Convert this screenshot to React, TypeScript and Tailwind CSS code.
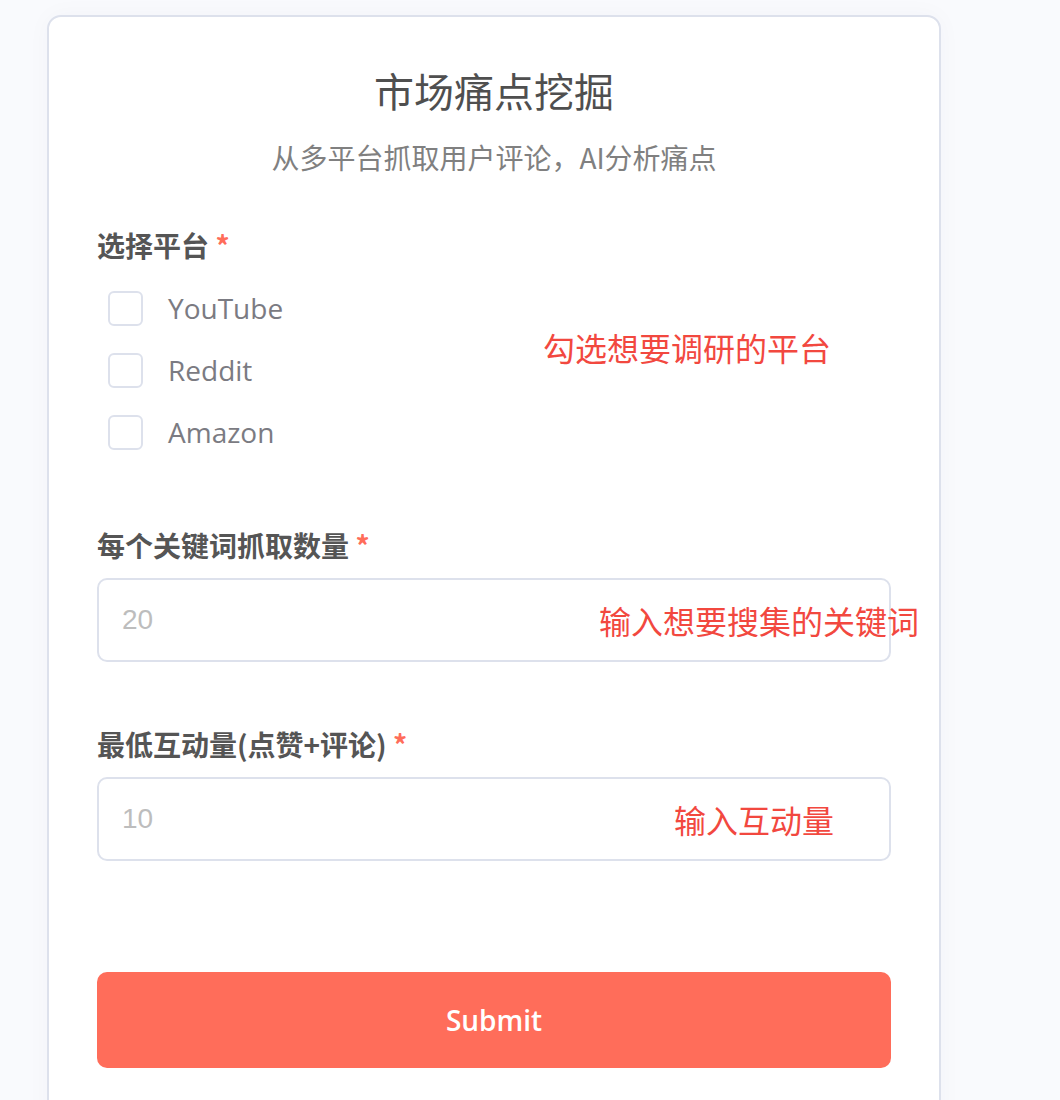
import React from "react";

const cjk = "font-['Noto_Sans_CJK_SC',sans-serif]";

// Little red notes laid over the form
const Note = ({ text, className }: { text: string; className: string }) => (
  <span
    className={`absolute whitespace-nowrap text-[32px] leading-[40px] text-[#f2483f] ${cjk} ${className}`}
  >
    {text}
  </span>
);

const Label = ({ text }: { text: string }) => (
  <div className={`text-[28px] leading-[36px] font-bold text-[#555555] ${cjk}`}>
    {text} <span className="text-[#ff6d5a]">*</span>
  </div>
);

const platforms = ["YouTube", "Reddit", "Amazon"];

const App = () => {
  return (
    <div className="min-h-screen bg-[#f9fafd] pl-[47px] pt-[15px]">
      <div className="w-[894px] rounded-[14px] border-2 border-[#dde1ec] bg-white px-[48px] pt-[49px] pb-[60px] shadow-[0_0_24px_rgba(40,50,90,0.03)]">
        {/* Header */}
        <h1 className={`text-center text-[40px] leading-[48px] text-[#4f4f4f] ${cjk}`}>
          市场痛点挖掘
        </h1>
        <p className={`mt-[25px] text-center text-[28px] leading-[36px] text-[#808080] ${cjk}`}>
          从多平台抓取用户评论，AI分析痛点
        </p>

        {/* Platform select */}
        <div className="mt-[52px]">
          <Label text="选择平台" />
          <div className="relative mt-[14px]">
            {platforms.map((p) => (
              <label key={p} className="flex h-[62px] items-center pl-[11px]">
                <span className="h-[35px] w-[35px] rounded-[6px] border-2 border-[#dde1ec] bg-white" />
                <span className="ml-[25px] font-['Open_Sans',sans-serif] text-[28px] text-[#7b7b82]">
                  {p}
                </span>
              </label>
            ))}
            <Note text="勾选想要调研的平台" className="left-[446px] top-[50px]" />
          </div>
        </div>

        {/* Keyword count */}
        <div className="mt-[64px]">
          <Label text="每个关键词抓取数量" />
          <div className="relative mt-[15px] flex h-[84px] items-center rounded-[10px] border-2 border-[#dde1ec] pl-[23px]">
            <span className="font-['Liberation_Sans',sans-serif] text-[28px] text-[#bdbdbd]">20</span>
            <Note text="输入想要搜集的关键词" className="left-[500px] top-[20px]" />
          </div>
        </div>

        {/* Min interactions */}
        <div className="mt-[64px]">
          <Label text="最低互动量(点赞+评论)" />
          <div className="relative mt-[15px] flex h-[84px] items-center rounded-[10px] border-2 border-[#dde1ec] pl-[23px]">
            <span className="font-['Liberation_Sans',sans-serif] text-[28px] text-[#bdbdbd]">10</span>
            <Note text="输入互动量" className="left-[575px] top-[20px]" />
          </div>
        </div>

        <button className="mt-[111px] flex h-[96px] w-full items-center justify-center rounded-[10px] bg-[#ff6d5a] font-['Open_Sans',sans-serif] text-[28px] font-semibold text-white">
          Submit
        </button>
      </div>
    </div>
  );
};

export default App;
